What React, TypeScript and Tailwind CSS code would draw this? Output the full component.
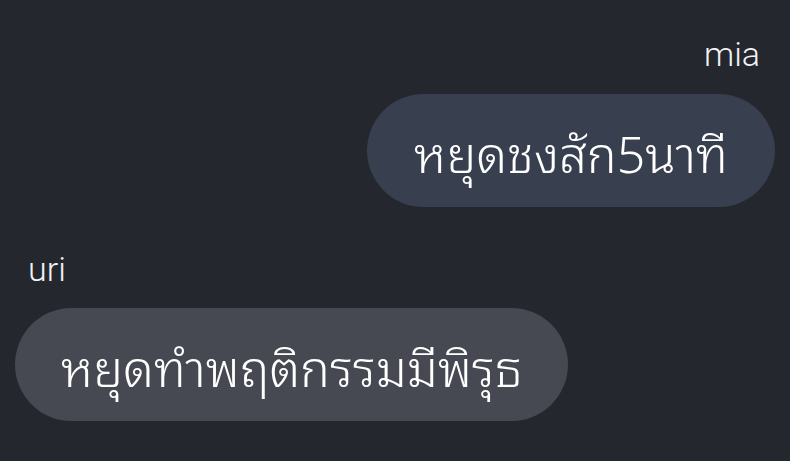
import React from "react";

export default function App() {
  return (
    <div className="w-[790px] h-[461px] bg-[#25272e] flex flex-col px-[15px] overflow-hidden font-['Roboto','Noto_Sans',sans-serif]">
      <div className="flex flex-col items-end pt-[34px]">
        <div className="text-[34px] leading-[40px] font-light text-[#f2f3f5] pr-[15px]">mia</div>
        <div className="mt-[20px] h-[113px] rounded-full bg-[#383f4e] px-[47px] flex items-center text-[50px] font-light text-white font-['Noto_Sans_Thai_Looped',Roboto,sans-serif]">
          หยุดชงสัก5นาที
        </div>
      </div>
      <div className="flex flex-col items-start mt-[42px]">
        <div className="text-[34px] leading-[40px] font-light text-[#f2f3f5] pl-[13px]">uri</div>
        <div className="mt-[19px] h-[113px] rounded-full bg-[#464951] px-[46px] flex items-center text-[50px] font-light text-white font-['Noto_Sans_Thai_Looped',Roboto,sans-serif]">
          หยุดทำพฤติกรรมมีพิรุธ
        </div>
      </div>
    </div>
  );
}
